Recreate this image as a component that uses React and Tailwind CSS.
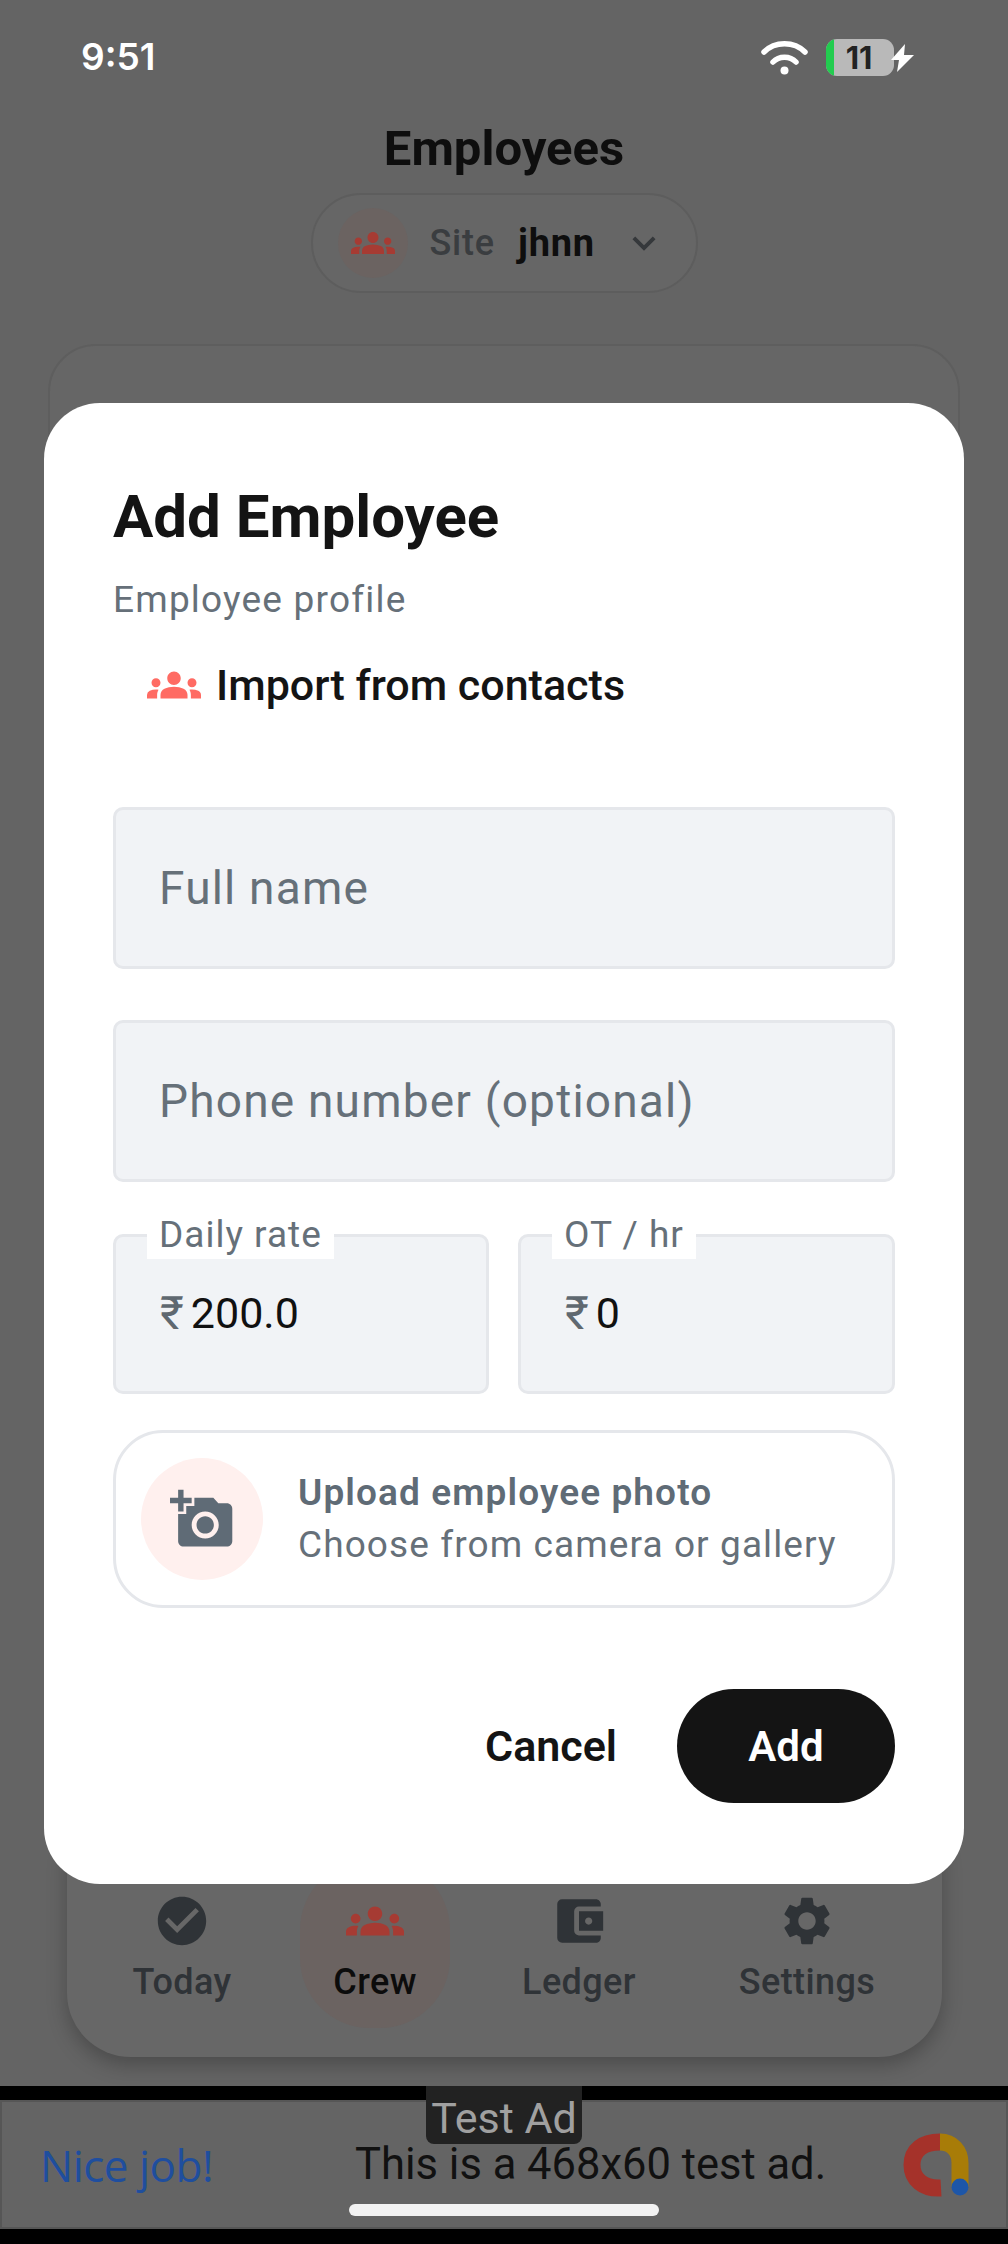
import React from 'react'
import { MdGroups, MdCheckCircle, MdAccountBalanceWallet, MdSettings, MdAddAPhoto, MdKeyboardArrowDown } from 'react-icons/md'

const WifiIcon = () => (
  <svg width="47" height="35" viewBox="0 0 47 35" fill="none" stroke="white" strokeLinecap="round" strokeWidth="5.5">
    <path d="M3 12 C14 1 33 1 44 12" />
    <path d="M12 22 C18 15.5 29 15.5 35 22" />
    <circle cx="23.5" cy="30.5" r="4" fill="white" stroke="none" />
  </svg>
)

const BoltIcon = () => (
  <svg width="28" height="30" viewBox="0 0 28 30" fill="white">
    <path d="M17 1 L3 17 L11 17 L9 29 L26 12 L16 12 Z" />
  </svg>
)

const AdLogo = () => (
  <svg width="66" height="64" viewBox="0 0 66 64" fill="none" strokeWidth="17">
    <path d="M38 55 C20 56 9 46 9 32 C9 17 20 9 37 9" stroke="#a5322a" />
    <path d="M37 9 C49 9 57 18 57 30 V54" stroke="#a87c08" />
    <circle cx="57" cy="54" r="8.5" fill="#1d56a8" />
  </svg>
)

const NavItem = ({ icon: Icon, label, className, active }) => (
  <div className={`absolute top-0 flex w-[150px] flex-col items-center ${className}`}>
    <Icon className={`mt-[7px] h-[58px] w-[58px] ${active ? 'text-[#a63b33]' : 'text-[#2f3337]'}`} />
    <span className={`mt-[8px] text-[36px] leading-[48px] font-medium tracking-[0.4px] ${active ? 'text-[#0c0c0c]' : 'text-[#2f3337]'}`}>{label}</span>
  </div>
)

const Field = ({ text }) => (
  <div className="flex h-[162px] items-center rounded-[10px] border-[3px] border-[#e5e7eb] bg-[#f1f3f6] pl-[43px] text-[46px] tracking-[1.2px] text-[#667079]">
    {text}
  </div>
)

const MoneyField = ({ label, value, className }) => (
  <div className={`relative h-[160px] rounded-[10px] border-[3px] border-[#e5e7eb] bg-[#f1f3f6] ${className}`}>
    <span className="absolute -top-[24px] left-[31px] h-[46px] bg-white px-[12px] text-[37px] leading-[44px] tracking-[1px] text-[#667079]">{label}</span>
    <div className="flex h-full items-center pl-[44px] pb-[2px] text-[43px] text-[#111111]">
      <span className="mr-[7px] text-[46px] text-[#5f6870]">₹</span>
      {value}
    </div>
  </div>
)

export default function App() {
  return (
    <div className="relative h-[2244px] w-[1008px] overflow-hidden bg-[#646464] font-['Roboto',sans-serif]">
      {/* status bar */}
      <div className="flex h-[114px] items-start justify-between pt-[33px] pr-[92px] pl-[81px]">
        <span className="font-['Inter',sans-serif] text-[37px] leading-[48px] font-semibold text-white">9:51</span>
        <div className="flex items-center pt-[6px]">
          <WifiIcon />
          <div className="ml-[18px] flex h-[37px] w-[68px] overflow-hidden rounded-[11px] bg-[#b9b9b9]">
            <div className="h-full w-[8px] bg-[#22cc4f]" />
            <span className="w-[50px] text-center font-['Inter',sans-serif] text-[31px] leading-[37px] font-bold text-[#222222]">11</span>
          </div>
          <div className="-ml-[6px]"><BoltIcon /></div>
        </div>
      </div>

      {/* page behind the dialog */}
      <h1 className="mt-[3px] text-center text-[49px] leading-[64px] font-bold text-[#0e0e0e]">Employees</h1>
      <div className="mx-auto mt-[12px] flex h-[100px] w-[387px] items-center rounded-full border-2 border-[#5d5d5d] bg-[#666666] pl-[25px]">
        <div className="flex h-[70px] w-[70px] items-center justify-center rounded-full bg-[#6b6361]">
          <MdGroups className="h-[44px] w-[44px] text-[#a63b33]" />
        </div>
        <span className="ml-[22px] text-[36px] font-medium tracking-[0.8px] text-[#3a3d40]">Site</span>
        <span className="ml-[23px] text-[38px] font-bold tracking-[0.8px] text-[#0e0e0e]">jhnn</span>
        <MdKeyboardArrowDown className="ml-[26px] h-[46px] w-[46px] text-[#35383b]" />
      </div>
      <div className="mx-auto mt-[51px] h-[1300px] w-[912px] rounded-[48px] border-2 border-[#5e5e5e] bg-[#666666]" />

      {/* bottom nav, top edge sits under the dialog */}
      <div className="absolute top-[1800px] left-[67px] h-[257px] w-[875px] rounded-[64px] bg-[#676767] shadow-[0_8px_20px_rgba(0,0,0,0.25)]">
        <div className="absolute top-[60px] left-[233px] h-[168px] w-[150px] rounded-[70px] bg-[#6b6361]" />
        <div className="absolute top-[85px] left-0 h-[172px] w-full">
          <NavItem icon={MdCheckCircle} label="Today" className="left-[40px]" />
          <NavItem icon={MdGroups} label="Crew" className="left-[233px]" active />
          <NavItem icon={MdAccountBalanceWallet} label="Ledger" className="left-[437px]" />
          <NavItem icon={MdSettings} label="Settings" className="left-[665px]" />
        </div>
      </div>

      {/* ad banner */}
      <div className="absolute top-[2086px] left-0 h-[158px] w-full bg-black">
        <div className="mt-[14px] flex h-[129px] items-center border-2 border-[#565656] bg-[#646464] pr-[37px] pl-[38px]">
          <span className="font-['Open_Sans',sans-serif] text-[44px] font-medium tracking-[-0.5px] text-[#1f4e9e]">Nice job!</span>
          <span className="ml-[142px] text-[43.5px] text-[#111111]">This is a 468x60 test ad.</span>
          <div className="ml-auto"><AdLogo /></div>
        </div>
        <div className="absolute top-0 left-[426px] flex h-[58px] w-[156px] items-end justify-center rounded-b-[8px] bg-[#222222] text-[43px] leading-[52px] text-[#a0a0a0]">Test Ad</div>
        <div className="absolute top-[118px] left-[349px] h-[12px] w-[310px] rounded-full bg-[#f2f2f2]" />
      </div>

      {/* add employee dialog */}
      <div className="absolute top-[403px] left-[44px] flex h-[1481px] w-[920px] flex-col rounded-[56px] bg-white px-[69px] pt-[76px]">
        <h2 className="text-[60px] leading-[76px] font-bold text-[#141414]">Add Employee</h2>
        <p className="mt-[24px] text-[37px] leading-[42px] tracking-[1.2px] text-[#667079]">Employee profile</p>
        <div className="mt-[39px] ml-[34px] flex h-[50px] items-center">
          <MdGroups className="h-[54px] w-[54px] text-[#ff6b63]" />
          <span className="ml-[15px] text-[43px] font-medium text-[#141414]">Import from contacts</span>
        </div>
        <div className="mt-[97px] flex flex-col gap-[51px]">
          <Field text="Full name" />
          <Field text="Phone number (optional)" />
        </div>
        <div className="mt-[52px] flex gap-[29px]">
          <MoneyField label="Daily rate" value="200.0" className="w-[376px]" />
          <MoneyField label="OT / hr" value="0" className="w-[377px]" />
        </div>
        <div className="mt-[36px] flex h-[178px] items-center rounded-[50px] border-[3px] border-[#e5e7eb] pl-[25px]">
          <div className="flex h-[122px] w-[122px] items-center justify-center rounded-full bg-[#fff0ee]">
            <MdAddAPhoto className="h-[65px] w-[65px] text-[#5f6b76]" />
          </div>
          <div className="ml-[35px] flex flex-col gap-[8px]">
            <span className="text-[37px] leading-[44px] font-semibold tracking-[1.1px] text-[#5f6b76]">Upload employee photo</span>
            <span className="text-[37px] leading-[44px] tracking-[1.1px] text-[#667079]">Choose from camera or gallery</span>
          </div>
        </div>
        <div className="mt-[81px] flex items-center justify-end">
          <button className="mr-[60px] text-[43px] font-semibold text-[#141414]">Cancel</button>
          <button className="h-[114px] w-[218px] rounded-full bg-[#141414] text-[42px] font-semibold text-white">Add</button>
        </div>
      </div>
    </div>
  )
}
